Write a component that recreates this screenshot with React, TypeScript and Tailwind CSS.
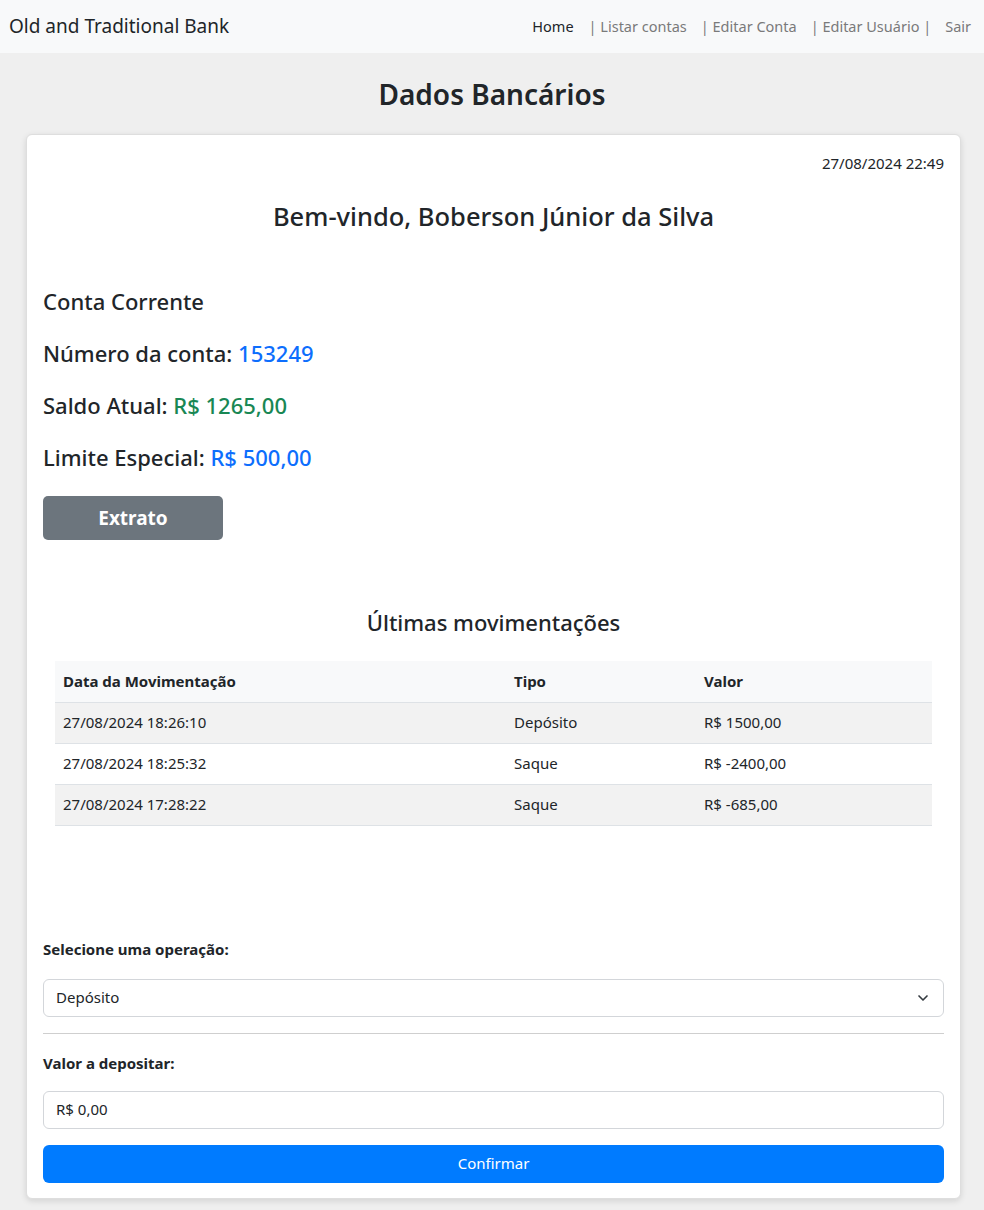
import { ChevronDown } from 'lucide-react';

type Movimentacao = {
  data: string;
  tipo: string;
  valor: string;
};

const movimentacoes: Movimentacao[] = [
  { data: '27/08/2024 18:26:10', tipo: 'Depósito', valor: 'R$ 1500,00' },
  { data: '27/08/2024 18:25:32', tipo: 'Saque', valor: 'R$ -2400,00' },
  { data: '27/08/2024 17:28:22', tipo: 'Saque', valor: 'R$ -685,00' }
];

const navLinks = ['| Listar contas', '| Editar Conta', '| Editar Usuário |', 'Sair'];

export default function App() {
  return (
    <div className="min-h-[1210px] bg-[#efefef] font-['Noto_Sans',sans-serif] text-[#212529]">
      {/* Navbar */}
      <nav className="flex h-[53px] items-center justify-between bg-[#f8f9fa] pl-[9px] pr-[6px]">
        <span className="text-[19px] text-[#212529]">Old and Traditional Bank</span>
        <ul className="flex items-center text-[14.5px]">
          <li className="px-[8px] text-[#212529]">Home</li>
          {navLinks.map((link) => (
            <li key={link} className="px-[7px] text-[#7a7a7a]">
              {link}
            </li>
          ))}
        </ul>
      </nav>

      <h2 className="mt-[23px] text-center text-[28px] leading-[36px] font-semibold">
        Dados Bancários
      </h2>

      <div className="mt-[22px] mr-[23px] ml-[26px] rounded-md border border-[#dedede] bg-white px-[16px] pt-[16px] pb-[15px] shadow-[0_2px_6px_rgba(0,0,0,0.12)]">
        <p className="text-right text-[15px] leading-[24px]">27/08/2024 22:49</p>

        <h3 className="mt-[26px] text-center text-[25.5px] leading-[30px] font-medium">
          Bem-vindo, Boberson Júnior da Silva
        </h3>

        <div className="mt-[58px] flex flex-col gap-[28px] text-[22px] leading-[24px] font-medium">
          <p>Conta Corrente</p>
          <p>
            Número da conta: <span className="text-[#0d6efd]">153249</span>
          </p>
          <p>
            Saldo Atual: <span className="text-[#198754]">R$ 1265,00</span>
          </p>
          <p>
            Limite Especial: <span className="text-[#0d6efd]">R$ 500,00</span>
          </p>
        </div>

        <button className="mt-[27px] h-[44px] w-[180px] rounded-[5px] bg-[#6c757d] text-[19px] font-bold text-white">
          Extrato
        </button>

        <h4 className="mt-[68px] text-center text-[22px] leading-[28px] font-medium">
          Últimas movimentações
        </h4>

        <div className="mx-[12px] mt-[25px]">
          <table className="w-full border-collapse text-left text-[15px]">
            <thead>
              <tr className="h-[41px] border-b border-[#dee2e6] bg-[#f8f9fa]">
                <th className="w-[451px] px-[8px] font-bold">Data da Movimentação</th>
                <th className="w-[190px] px-[8px] font-bold">Tipo</th>
                <th className="px-[8px] font-bold">Valor</th>
              </tr>
            </thead>
            <tbody>
              {movimentacoes.map((mov, i) => (
                <tr
                  key={mov.data}
                  className={`h-[41px] border-b border-[#dee2e6] ${i % 2 === 0 ? 'bg-[#f2f2f2]' : 'bg-white'}`}
                >
                  <td className="px-[8px]">{mov.data}</td>
                  <td className="px-[8px]">{mov.tipo}</td>
                  <td className="px-[8px]">{mov.valor}</td>
                </tr>
              ))}
            </tbody>
          </table>
        </div>

        <label className="mt-[112px] block text-[15px] leading-[22px] font-bold">
          Selecione uma operação:
        </label>
        <div className="mt-[19px] flex h-[38px] items-center justify-between rounded-md border border-[#d3d6da] px-[12px] text-[15px]">
          <span>Depósito</span>
          <ChevronDown size={16} strokeWidth={2.5} className="text-[#343a40]" />
        </div>

        <hr className="my-[16px] border-t border-[#cfcfcf]" />

        <label className="mt-[18px] block text-[15px] leading-[22px] font-bold">
          Valor a depositar:
        </label>
        <div className="mt-[17px] flex h-[38px] items-center rounded-md border border-[#d3d6da] px-[12px] text-[15px]">
          R$ 0,00
        </div>

        <button className="mt-[16px] h-[38px] w-full rounded-md bg-[#007bff] text-[15px] text-white">
          Confirmar
        </button>
      </div>
    </div>
  );
}
